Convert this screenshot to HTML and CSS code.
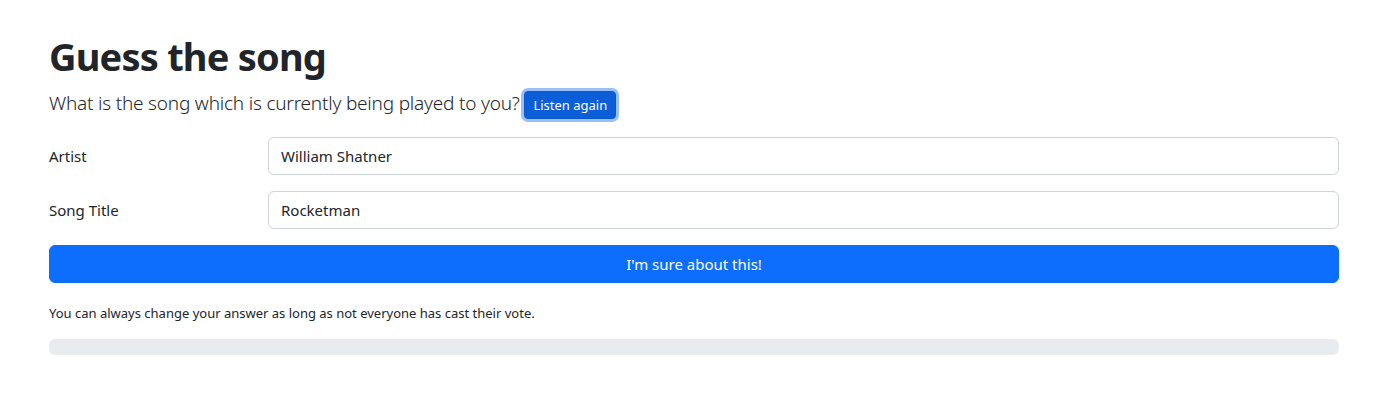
FILE: index.html
```html
<!DOCTYPE html>
<html lang="en">
<head>
<meta charset="utf-8">
<title>Guess the song</title>
<link rel="stylesheet" href="styles.css">
</head>
<body>
<main class="page">
  <h1 class="title">Guess the song</h1>
  <p class="lead">What is the song which is currently being played to you? <button class="btn-listen" type="button">Listen again</button></p>
  <form class="guess">
    <div class="row">
      <label class="label" for="artist">Artist</label>
      <input class="input" id="artist" type="text" value="William Shatner">
    </div>
    <div class="row">
      <label class="label" for="title">Song Title</label>
      <input class="input" id="title" type="text" value="Rocketman">
    </div>
    <button class="btn-submit" type="button">I'm sure about this!</button>
  </form>
  <p class="note">You can always change your answer as long as not everyone has cast their vote.</p>
  <div class="progress"><div class="progress-bar" style="width:0%"></div></div>
</main>
</body>
</html>
```
FILE: styles.css
```css
* { box-sizing: border-box; }
html, body { margin: 0; padding: 0; background: #fff; }
body {
  font-family: "Noto Sans", "Open Sans", sans-serif;
  color: #212529;
  font-size: 15px;
  line-height: 1.5;
}
.page {
  padding: 32px 58px 0 49px;
}
.title {
  margin: 0 0 8px;
  font-size: 38px;
  font-weight: 700;
  line-height: 48px;
  letter-spacing: -0.8px;
}
.lead {
  margin: 0 0 18px;
  font-size: 19px;
  font-weight: 300;
  line-height: 30px;
  letter-spacing: -0.2px;
}
.btn-listen {
  display: inline-block;
  font-family: inherit;
  font-size: 13px;
  line-height: 20px;
  padding: 3px 8px;
  color: #fff;
  background: #0b5ed7;
  border: 1px solid #0a58ca;
  border-radius: 4px;
  box-shadow: 0 0 0 3px #98bff9;
  vertical-align: baseline;
  letter-spacing: 0;
}
.guess { display: flex; flex-direction: column; }
.row {
  display: grid;
  grid-template-columns: 195px 1fr;
  column-gap: 24px;
  align-items: center;
  margin-bottom: 16px;
}
.label { font-size: 15px; }
.input {
  height: 38px;
  font-family: inherit;
  font-size: 15px;
  color: #212529;
  padding: 6px 12px;
  border: 1px solid #ced4da;
  border-radius: 6px;
  background: #fff;
}
.btn-submit {
  height: 38px;
  font-family: inherit;
  font-size: 15px;
  color: #fff;
  background: #0d6efd;
  border: 1px solid #0d6efd;
  border-radius: 6px;
}
.note {
  margin: 16px 0 15px;
  font-size: 13px;
  line-height: 21px;
  padding-top: 4px;
}
.progress {
  height: 16px;
  background: #e9ecef;
  border-radius: 6px;
  overflow: hidden;
}
.progress-bar { height: 100%; background: #0d6efd; }
```
